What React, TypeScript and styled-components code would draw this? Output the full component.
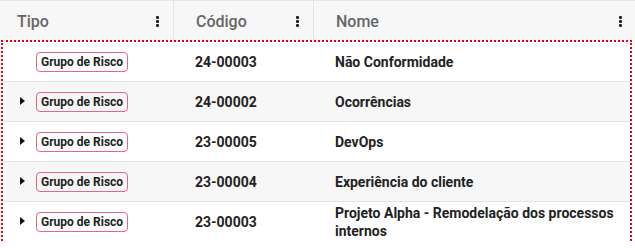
import styled, { createGlobalStyle } from "styled-components";

const GlobalStyle = createGlobalStyle`
  html, body {
    margin: 0;
    padding: 0;
    background: #fff;
    font-family: Roboto, "Liberation Sans", sans-serif;
  }
`;

const Grid = styled.div`
  width: 635px;
  background: #fff;
`;

const HeaderRow = styled.div`
  display: grid;
  grid-template-columns: 174px 140px 1fr;
  height: 40px;
  background: #f7f7f7;
  border-top: 1px solid #e6e6e6;
`;

const HeaderCell = styled.div<{ $first?: boolean; $last?: boolean }>`
  display: flex;
  align-items: center;
  justify-content: space-between;
  padding: 0 ${(p) => (p.$last ? "13px" : "14px")} 0
    ${(p) => (p.$first ? "17px" : "22px")};
  border-right: ${(p) => (p.$last ? "none" : "1px solid #e3e3e3")};
  color: #666;
  font-size: 16px;
  font-weight: 500;
`;

const Kebab = styled.span`
  display: flex;
  flex-direction: column;
  gap: 1px;

  i {
    display: block;
    width: 3px;
    height: 3px;
    border-radius: 1px;
    background: #222;
  }
`;

const Body = styled.div`
  margin: 1px 3px 0 3px;
  width: 627px;
  outline: 2px dotted #e3000f;
`;

const Row = styled.div<{ $striped?: boolean }>`
  display: grid;
  grid-template-columns: 171px 140px 1fr;
  height: 40px;
  box-sizing: border-box;
  background: ${(p) => (p.$striped ? "#f7f7f7" : "#fff")};
  border-bottom: 1px solid #e4e4e4;

  &:last-child {
    border-bottom: none;
  }
`;

const TypeCell = styled.div`
  display: flex;
  align-items: center;
  padding-left: 17px;
`;

const Toggle = styled.span<{ $hidden?: boolean }>`
  width: 0;
  height: 0;
  margin-top: -2px;
  border-top: 4.5px solid transparent;
  border-bottom: 4.5px solid transparent;
  border-left: 5px solid #111;
  margin-right: 11px;
  visibility: ${(p) => (p.$hidden ? "hidden" : "visible")};
`;

const Badge = styled.span`
  display: inline-flex;
  align-items: center;
  height: 20px;
  box-sizing: border-box;
  padding: 0 4px;
  border: 1px solid #e8638a;
  border-radius: 4px;
  font-size: 12px;
  font-weight: 700;
  color: #222;
`;

const TextCell = styled.div`
  display: flex;
  align-items: center;
  padding: 0 8px 0 21px;
  font-size: 14px;
  font-weight: 700;
  line-height: 18px;
  color: #222;
`;

const columns = ["Tipo", "Código", "Nome"];

const rows = [
  { code: "24-00003", name: "Não Conformidade", children: false },
  { code: "24-00002", name: "Ocorrências", children: true },
  { code: "23-00005", name: "DevOps", children: true },
  { code: "23-00004", name: "Experiência do cliente", children: true },
  {
    code: "23-00003",
    name: "Projeto Alpha - Remodelação dos processos internos",
    children: true,
  },
];

export default function App() {
  return (
    <>
      <GlobalStyle />
      <Grid>
        <HeaderRow>
          {columns.map((c, i) => (
            <HeaderCell key={c} $first={i === 0} $last={i === columns.length - 1}>
              {c}
              <Kebab>
                <i />
                <i />
                <i />
              </Kebab>
            </HeaderCell>
          ))}
        </HeaderRow>
        <Body>
          {rows.map((r, i) => (
            <Row key={r.code} $striped={i % 2 === 1}>
              <TypeCell>
                <Toggle $hidden={!r.children} />
                <Badge>Grupo de Risco</Badge>
              </TypeCell>
              <TextCell>{r.code}</TextCell>
              <TextCell>{r.name}</TextCell>
            </Row>
          ))}
        </Body>
      </Grid>
    </>
  );
}
